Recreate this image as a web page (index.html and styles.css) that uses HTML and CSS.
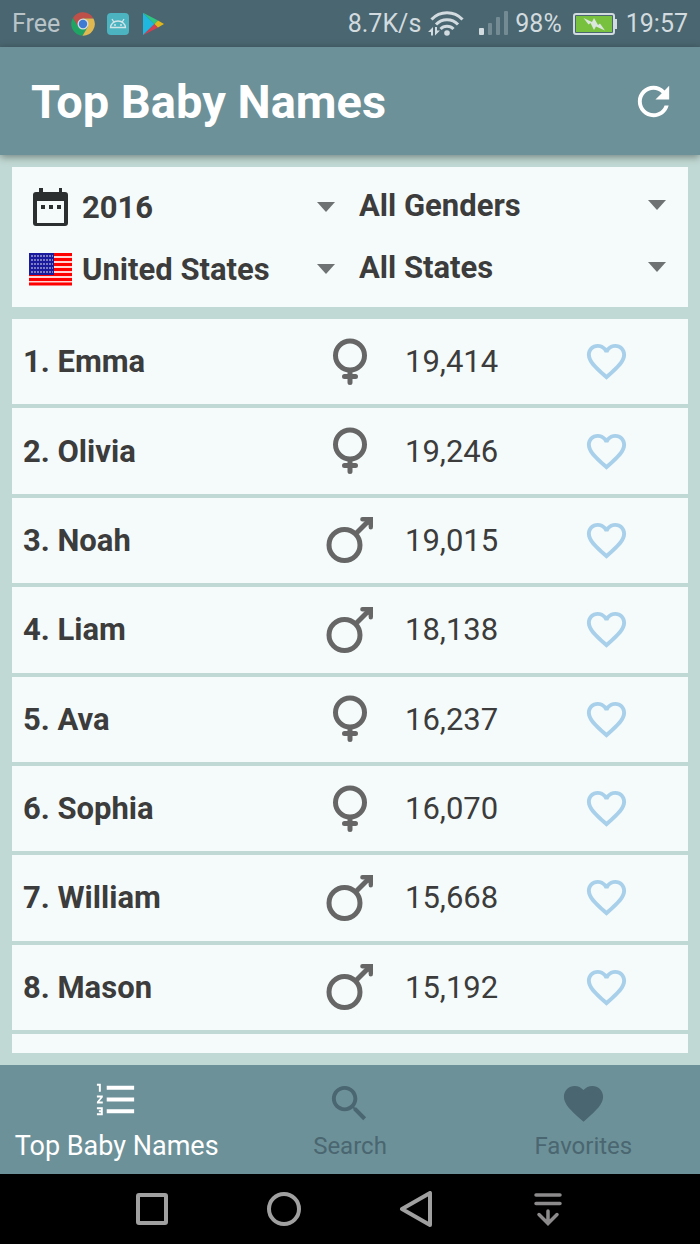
FILE: index.html
```
<!DOCTYPE html>
<html lang="en">
<head>
    <meta charset="UTF-8">
    <meta name="viewport" content="width=device-width, initial-scale=1.0">
    <title>Top Baby Names</title>
    <link rel="stylesheet" href="styles.css">
</head>
<body>
    <!-- Shared icons -->
    <svg class="icon-defs" aria-hidden="true">
        <symbol id="female" viewBox="0 0 48 48">
            <g fill="none" stroke="#666" stroke-width="5" stroke-linecap="round">
                <circle cx="24" cy="17.5" r="14.5"/>
                <path d="M24 33v11.500M18.500 38.500h11"/>
            </g>
        </symbol>
        <symbol id="male" viewBox="0 0 48 48">
            <circle cx="18.5" cy="29" r="15.5" fill="none" stroke="#666" stroke-width="5"/>
            <path d="M30 17.500L42 5.500" fill="none" stroke="#666" stroke-width="5"/>
            <path d="M47 1v10q0 2.500-2.200 2.500T42.600 11V9L39 5.600H36.500q-2.300 0-2.300-2.300T36.500 1z" fill="#666"/>
        </symbol>
        <symbol id="heart-outline" viewBox="0 0 24 24">
            <path fill="#a9d0ea" d="M16.500 3c-1.740 0-3.410.81-4.500 2.090C10.910 3.810 9.240 3 7.500 3 4.420 3 2 5.420 2 8.500c0 3.780 3.400 6.860 8.550 11.540L12 21.350l1.450-1.320C18.600 15.360 22 12.280 22 8.500 22 5.420 19.580 3 16.500 3zm-4.400 15.550l-.1.100-.1-.1C7.140 14.240 4 11.390 4 8.500 4 6.500 5.500 5 7.500 5c1.540 0 3.040.99 3.570 2.360h1.870C13.460 5.990 14.960 5 16.500 5c2 0 3.500 1.500 3.500 3.500 0 2.890-3.140 5.740-7.900 10.050z"/>
        </symbol>
    </svg>

    <div class="status-bar">
        <div class="status-left">
            <span>Free</span>
            <svg class="status-icon" viewBox="0 0 24 24" aria-hidden="true">
                <path d="M12 6.500H22.400A11.700 11.700 0 0 0 1.900 6L7.200 14.700z" fill="#bd5149"/>
                <path d="M1.900 6A11.700 11.700 0 0 0 11.500 23.700L16.800 14.700H7.200z" fill="#1fa463"/>
                <path d="M12 6.500H22.400A11.700 11.700 0 0 1 11.500 23.700L16.800 14.700z" fill="#dfb851"/>
                <circle cx="12" cy="12" r="5.500" fill="#d5dde2"/>
                <circle cx="12" cy="12" r="4.200" fill="#3f7ad3"/>
            </svg>
            <svg class="status-icon" viewBox="0 0 24 24" aria-hidden="true">
                <rect x="1" y="1" width="22" height="22" rx="4" fill="#4bb4c0"/>
                <path d="M4.500 15.500a7.500 6.500 0 0 1 15 0zM7.800 10L6 7M16.200 10l1.800-3" fill="none" stroke="#d2e5e9" stroke-width="1.300"/>
                <circle cx="9" cy="13" r="1" fill="#d2e5e9"/>
                <circle cx="15" cy="13" r="1" fill="#d2e5e9"/>
            </svg>
            <svg class="status-icon" viewBox="0 0 24 24" aria-hidden="true">
                <path d="M2 .8L13.500 12 2 23.200z" fill="#1fb6e0"/>
                <path d="M2 .8L17 8.500 13.500 12z" fill="#2fc681"/>
                <path d="M2 23.200L17 15.500 13.500 12z" fill="#d13f51"/>
                <path d="M17 8.500L23 12l-6 3.500L13.500 12z" fill="#dfb71d"/>
            </svg>
        </div>
        <div class="status-right">
            <span>8.7K/s</span>
            <svg class="wifi" viewBox="0 0 38 26" aria-hidden="true">
                <g fill="none" stroke="#d2dbdf" stroke-width="3">
                    <path d="M4.500 8.500a21 21 0 0 1 31 0"/>
                    <path d="M9 13.500a15 15 0 0 1 22 0"/>
                    <path d="M13.500 18a9 9 0 0 1 13 0"/>
                </g>
                <circle cx="20" cy="22" r="2.800" fill="#d2dbdf"/>
                <path d="M1 21l5-5v8.500H4v-3.500zM13 19.500l-5 5V16h2v3.500z" fill="#d2dbdf"/>
            </svg>
            <svg class="signal" viewBox="0 0 30 26" aria-hidden="true">
                <rect x="0" y="17" width="5" height="7" rx="1" fill="#d2dbdf"/>
                <g fill="#748b93">
                    <rect x="9" y="12" width="4" height="12" rx="1"/>
                    <rect x="17" y="6" width="4" height="18" rx="1"/>
                    <rect x="25" y="0" width="4" height="24" rx="1"/>
                </g>
            </svg>
            <span>98%</span>
            <svg class="battery" viewBox="0 0 44 22" aria-hidden="true">
                <rect x="1" y="1" width="40" height="20" rx="2" fill="#4a6670" stroke="#d2dbdf" stroke-width="2"/>
                <rect x="3" y="3" width="36" height="16" fill="#78c13f"/>
                <rect x="42" y="6" width="2" height="10" fill="#d2dbdf"/>
                <path d="M10.500 5l8.500 4 2-4 4 7 2-1.500 5 7-9-4-2 3.500-3.500-7-2 1.500z" fill="#dbe6dd"/>
            </svg>
            <span>19:57</span>
        </div>
    </div>

    <header class="app-bar">
        <h1>Top Baby Names</h1>
        <button class="icon-btn" type="button" aria-label="Refresh">
            <svg class="icon" viewBox="0 0 24 24"><path fill="#fff" d="M17.650 6.350C16.200 4.900 14.210 4 12 4c-4.420 0-7.990 3.580-7.990 8s3.570 8 7.990 8c3.730 0 6.840-2.550 7.730-6h-2.080c-.82 2.330-3.040 4-5.650 4-3.310 0-6-2.690-6-6s2.690-6 6-6c1.660 0 3.140.69 4.220 1.780L13 11h7V4l-2.350 2.350z"/></svg>
        </button>
    </header>

    <main class="content">
        <form class="card filters">
            <div class="filter-col">
                <div class="filter">
                    <svg class="filter-icon" viewBox="0 0 44 44" aria-hidden="true">
                        <path fill="#2c2f2f" fill-rule="evenodd" d="M10 3h4v4h16V3h3v4h3q3 0 3 3v28q0 3-3 3H7q-3 0-3-3V10q0-3 3-3h3zM8 16v22h27V16z"/>
                        <path fill="#2c2f2f" d="M12 20h4v4h-4zM20 20h4v4h-4zM28 20h4v4h-4z"/>
                    </svg>
                    <label class="select-box">
                        <select aria-label="Year"><option>2016</option></select>
                    </label>
                </div>
                <div class="filter">
                    <svg class="filter-icon" viewBox="0 0 44 44" aria-hidden="true">
                        <rect y="6" width="43" height="32" fill="#ffd3d3"/>
                        <path d="M0 7.500h43M0 12.500h43M0 17.500h43M0 22.500h43M0 27.500h43M0 32.500h43M0 37h43" stroke="#f00" stroke-width="3"/>
                        <rect y="6" width="25" height="22" fill="#1a1a9c"/>
                        <path d="M2 9h22M2 13h22M2 17h22M2 21h22M2 25h22" stroke="#7c7cc6" stroke-width="2" stroke-dasharray="2 1"/>
                    </svg>
                    <label class="select-box">
                        <select aria-label="Country"><option>United States</option></select>
                    </label>
                </div>
            </div>
            <div class="filter-col filter-col-right">
                <div class="filter">
                    <label class="select-box">
                        <select aria-label="Gender"><option>All Genders</option></select>
                    </label>
                </div>
                <div class="filter">
                    <label class="select-box">
                        <select aria-label="State"><option>All States</option></select>
                    </label>
                </div>
            </div>
        </form>

        <ul class="name-list">
            <li class="name-row">
                <span class="name">1. Emma</span>
                <svg class="gender"><use href="#female"/></svg>
                <div class="stat"><span>19,414</span><button class="icon-btn" type="button" aria-label="Favorite Emma"><svg class="icon"><use href="#heart-outline"/></svg></button></div>
            </li>
            <li class="name-row">
                <span class="name">2. Olivia</span>
                <svg class="gender"><use href="#female"/></svg>
                <div class="stat"><span>19,246</span><button class="icon-btn" type="button" aria-label="Favorite Olivia"><svg class="icon"><use href="#heart-outline"/></svg></button></div>
            </li>
            <li class="name-row">
                <span class="name">3. Noah</span>
                <svg class="gender"><use href="#male"/></svg>
                <div class="stat"><span>19,015</span><button class="icon-btn" type="button" aria-label="Favorite Noah"><svg class="icon"><use href="#heart-outline"/></svg></button></div>
            </li>
            <li class="name-row">
                <span class="name">4. Liam</span>
                <svg class="gender"><use href="#male"/></svg>
                <div class="stat"><span>18,138</span><button class="icon-btn" type="button" aria-label="Favorite Liam"><svg class="icon"><use href="#heart-outline"/></svg></button></div>
            </li>
            <li class="name-row">
                <span class="name">5. Ava</span>
                <svg class="gender"><use href="#female"/></svg>
                <div class="stat"><span>16,237</span><button class="icon-btn" type="button" aria-label="Favorite Ava"><svg class="icon"><use href="#heart-outline"/></svg></button></div>
            </li>
            <li class="name-row">
                <span class="name">6. Sophia</span>
                <svg class="gender"><use href="#female"/></svg>
                <div class="stat"><span>16,070</span><button class="icon-btn" type="button" aria-label="Favorite Sophia"><svg class="icon"><use href="#heart-outline"/></svg></button></div>
            </li>
            <li class="name-row">
                <span class="name">7. William</span>
                <svg class="gender"><use href="#male"/></svg>
                <div class="stat"><span>15,668</span><button class="icon-btn" type="button" aria-label="Favorite William"><svg class="icon"><use href="#heart-outline"/></svg></button></div>
            </li>
            <li class="name-row">
                <span class="name">8. Mason</span>
                <svg class="gender"><use href="#male"/></svg>
                <div class="stat"><span>15,192</span><button class="icon-btn" type="button" aria-label="Favorite Mason"><svg class="icon"><use href="#heart-outline"/></svg></button></div>
            </li>
            <li class="name-row"></li>
        </ul>
    </main>

    <nav class="tabs">
        <a class="tab active" href="#top">
            <svg class="icon" viewBox="0 0 24 24"><path fill="currentColor" d="M2 17h2v.5H3v1h1v.5H2v1h3v-4H2v1zm1-9h1V4H2v1h1v3zm-1 3h1.800L2 13.100v.9h3v-1H3.200L5 10.900V10H2v1zm5-6v2h14V5H7zm0 14h14v-2H7v2zm0-6h14v-2H7v2z"/></svg>
            <span>Top Baby Names</span>
        </a>
        <a class="tab" href="#search">
            <svg class="icon" viewBox="0 0 24 24"><path fill="currentColor" d="M15.500 14h-.79l-.28-.27C15.410 12.590 16 11.110 16 9.500 16 5.910 13.090 3 9.500 3S3 5.910 3 9.500 5.910 16 9.500 16c1.610 0 3.090-.59 4.230-1.570l.27.28v.79l5 4.990L20.490 19l-4.990-5zm-6 0C7.010 14 5 11.990 5 9.500S7.010 5 9.500 5 14 7.010 14 9.500 11.990 14 9.500 14z"/></svg>
            <span>Search</span>
        </a>
        <a class="tab" href="#favorites">
            <svg class="icon" viewBox="0 0 24 24"><path fill="currentColor" d="M12 21.350l-1.450-1.320C5.400 15.360 2 12.280 2 8.500 2 5.420 4.420 3 7.500 3c1.740 0 3.410.81 4.500 2.090C13.090 3.810 14.760 3 16.500 3 19.580 3 22 5.420 22 8.500c0 3.780-3.400 6.860-8.550 11.540L12 21.350z"/></svg>
            <span>Favorites</span>
        </a>
    </nav>

    <div class="system-nav">
        <button class="icon-btn" type="button" aria-label="Recent apps">
            <svg class="system-icon" viewBox="0 0 36 36"><rect x="4" y="4" width="28" height="28" rx="1" fill="none" stroke="#a0a0a0" stroke-width="4"/></svg>
        </button>
        <button class="icon-btn" type="button" aria-label="Home">
            <svg class="system-icon" viewBox="0 0 36 36"><circle cx="18" cy="18" r="15" fill="none" stroke="#a0a0a0" stroke-width="4"/></svg>
        </button>
        <button class="icon-btn" type="button" aria-label="Back">
            <svg class="system-icon" viewBox="0 0 36 36"><path d="M32 2v32L4 18z" fill="none" stroke="#a0a0a0" stroke-width="4" stroke-linejoin="round"/></svg>
        </button>
        <button class="icon-btn" type="button" aria-label="Notifications">
            <svg class="system-icon" viewBox="0 0 36 36"><path d="M6 4h24M6 12.500h24M18 20v12M9 23.500l9 9 9-9" fill="none" stroke="#8c8a8a" stroke-width="3.500" stroke-linecap="round"/></svg>
        </button>
    </div>
</body>
</html>
```
FILE: styles.css
```
* {
    box-sizing: border-box;
}

body {
    margin: 0;
    min-height: 100vh;
    display: flex;
    flex-direction: column;
    background: #c1d9d4;
    color: #3c3c3c;
    font-family: Roboto, sans-serif;
    font-size: 31px;
}

svg {
    display: block;
    flex: none;
}

.icon-defs {
    position: absolute;
    width: 0;
    height: 0;
}

.icon {
    width: 47px;
    height: 47px;
}

.icon-btn {
    padding: 0;
    border: none;
    background: none;
    cursor: pointer;
}

/* Status bar */
.status-bar {
    display: flex;
    justify-content: space-between;
    align-items: center;
    height: 47px;
    padding: 0 12px;
    background: #4a6670;
    color: #d2dbdf;
    font-size: 25px;
}

.status-left,
.status-right {
    display: flex;
    align-items: center;
}

.status-left {
    gap: 11px;
    color: #b9c4c9;
}

.status-right {
    gap: 6px;
}

.status-icon {
    width: 24px;
    height: 24px;
}

.wifi {
    width: 38px;
    height: 26px;
}

.signal {
    width: 30px;
    height: 26px;
    margin-left: 8px;
}

.battery {
    width: 44px;
    height: 22px;
    margin: 0 3px 0 5px;
}

/* App bar */
.app-bar {
    display: flex;
    justify-content: space-between;
    align-items: center;
    height: 108px;
    padding: 0 23px 0 31px;
    background: #6d9199;
    box-shadow: 0 2px 8px rgba(0, 0, 0, 0.4);
}

h1 {
    margin: 0;
    color: #fff;
    font-size: 47px;
    font-weight: bold;
}

.content {
    flex: 1;
    display: flex;
    flex-direction: column;
    gap: 12px;
    padding: 12px;
}

.card,
.name-row {
    background: #f5fbfb;
}

/* Filters */
.filters {
    display: grid;
    grid-template-columns: 1fr 1fr;
    height: 140px;
    padding: 9px 17px;
}

.filter-col {
    padding-right: 10px;
}

.filter-col-right {
    margin-top: -2px;
    padding: 0 0 0 9px;
}

.filter {
    display: flex;
    align-items: center;
    gap: 9px;
    height: 62px;
}

.filter-icon {
    width: 44px;
    height: 44px;
}

.select-box {
    flex: 1;
    display: grid;
    align-items: center;
}

.select-box select,
.select-box::after {
    grid-area: 1 / 1;
}

.select-box::after {
    content: "";
    justify-self: end;
    margin-right: 5px;
    border: 9px solid transparent;
    border-top: 10px solid #6e7272;
    border-bottom: none;
    pointer-events: none;
}

select {
    appearance: none;
    width: 100%;
    padding: 0;
    border: none;
    background: none;
    color: inherit;
    font: bold 31px Roboto, sans-serif;
}

/* Names */
.name-list {
    flex: 1;
    display: grid;
    grid-template-rows: repeat(8, 1fr) 19px;
    gap: 4px;
    margin: 0;
    padding: 0;
    list-style: none;
}

.name-row {
    display: grid;
    grid-template-columns: 1fr 48px 1fr;
    align-items: center;
}

.name {
    padding-left: 11px;
    font-weight: bold;
}

.gender {
    width: 48px;
    height: 48px;
}

.stat {
    display: flex;
    justify-content: space-between;
    align-items: center;
    padding: 0 58px 0 31px;
}

/* Bottom tabs */
.tabs {
    display: grid;
    grid-template-columns: repeat(3, 1fr);
    height: 109px;
    background: #6d9199;
}

.tab {
    display: flex;
    flex-direction: column;
    justify-content: space-between;
    align-items: center;
    padding: 15px 0 14px;
    color: #4a6670;
    font-size: 24px;
    line-height: 28px;
    text-decoration: none;
    white-space: nowrap;
}

.tab.active {
    padding-top: 11px;
    color: #fff;
    font-size: 27px;
}

.system-nav {
    display: flex;
    justify-content: center;
    align-items: center;
    gap: 96px;
    height: 70px;
    background: #000;
}

.system-icon {
    width: 36px;
    height: 36px;
}
```
